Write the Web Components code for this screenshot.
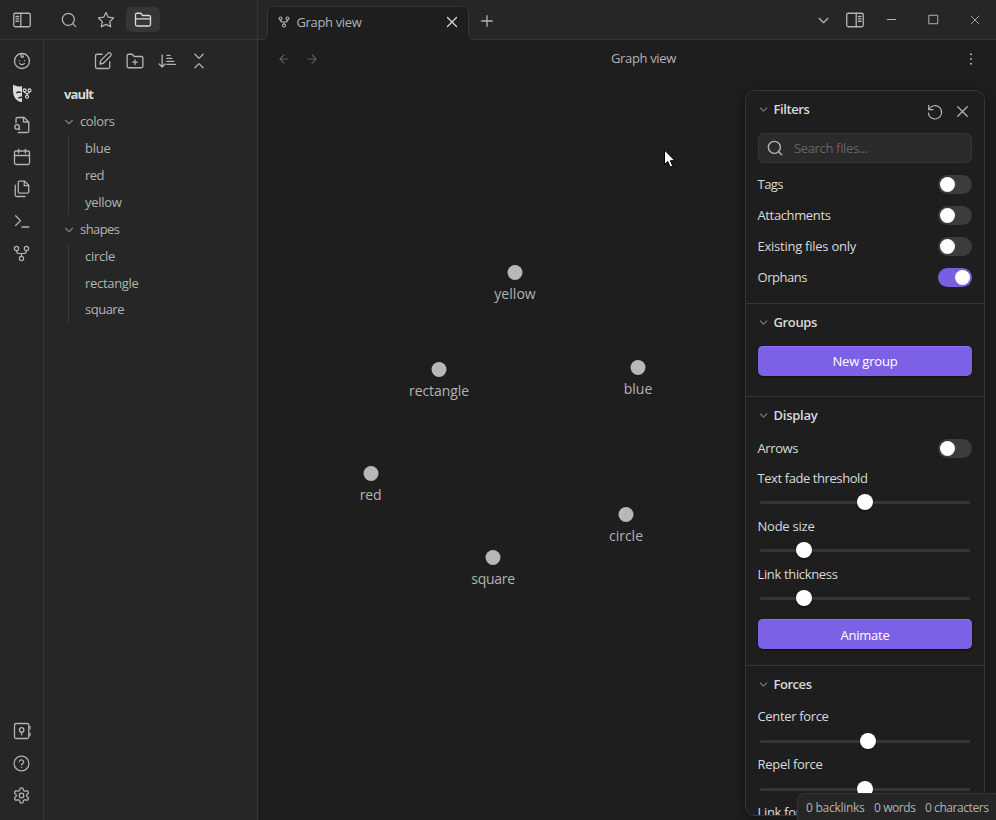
<!DOCTYPE html>
<html lang="en">
<head>
<meta charset="utf-8">
<title>Graph view</title>
<style>
html,body{margin:0;height:100%;background:#1e1e1e;overflow:hidden}
body{font:13px/18px "Open Sans","Noto Sans",sans-serif;color:#dadada}
</style>
</head>
<body>
<vault-app></vault-app>
<script>
const ICONS = {
  panelLeft:'<rect x="1" y="3" width="22" height="18" rx="2"/><path d="M10.4 3v18M4 7.3h3.4M4 10.5h3.4M4 13.7h3.4"/>',
  panelRight:'<rect x="1" y="3" width="22" height="18" rx="2"/><path d="M13.6 3v18M16.600 7.300h3.400M16.600 10.500h3.400M16.600 13.700h3.400"/>',
  search:'<circle cx="11" cy="11" r="9"/><path d="m22 22-4.5-4.500"/>',
  star:'<path d="M12 2l3.090 6.260L22 9.270l-5 4.870 1.180 6.880L12 17.770l-6.180 3.250L7 14.140 2 9.270l6.910-1.010z"/>',
  folder:'<path d="M22 10v8a2 2 0 0 1-2 2H4a2 2 0 0 1-2-2V5a2 2 0 0 1 2-2h5l2.500 3H20a2 2 0 0 1 2 2z"/><path d="M2 10.500h20"/>',
  baby:'<circle cx="12" cy="12" r="10"/><path d="M8.500 11.500h.01M15.500 11.500h.01M8.800 15.500c1.700 1.700 4.700 1.700 6.400 0M12.500 2.200c-2.300 1.300-2.500 4.300-.3 4.800 1.300.2 2-.9 1.500-1.800"/>',
  mask:'<path fill="currentColor" stroke="none" d="M0 0.500c4 2.500 8 3 12 2.500v21C4.500 23.500 0 17 0 9z"/><path stroke="#262626" stroke-width="2" stroke-linecap="butt" d="M4.500 12q3-2.500 6-.5M7 19q2-1.500 5.500-1.500"/><g stroke-width="1.500"><circle cx="15.500" cy="8.500" r="2"/><circle cx="22" cy="8.500" r="2"/><circle cx="18.700" cy="17" r="2"/><path d="M15.500 10.500c0 2 3.200 1.300 3.200 4 0-2.700 3.300-2 3.300-4"/></g>',
  fileSearch:'<path d="M4 9V4a2 2 0 0 1 2-2h9l6 6v12a2 2 0 0 1-2 2H7"/><path d="M14 2v6h6"/><circle cx="5.500" cy="14.500" r="3"/><path d="m9 18-1.500-1.500"/>',
  calendar:'<rect x="2" y="4" width="20" height="18" rx="2"/><path d="M16.500 1.500v5M7.500 1.500v5M2 10h20"/>',
  files:'<path d="M15.500 1.500H9a2 2 0 0 0-2 2v12a2 2 0 0 0 2 2h10a2 2 0 0 0 2-2V7z"/><path d="M15 2v5.500h5.500M3 7v13a2 2 0 0 0 2 2h11"/>',
  terminal:'<path d="m3.500 18 6.500-6.500L3.500 5M12 20h9"/>',
  fork:'<circle cx="5" cy="5" r="3"/><circle cx="19" cy="5" r="3"/><circle cx="12" cy="19" r="3"/><path d="M5 8c0 4 2 4 4 4h6c2 0 4 0 4-4M12 12v4"/>',
  vault:'<rect x="2" y="2" width="19" height="20" rx="2"/><circle cx="11.500" cy="10.500" r="3"/><path d="M11.500 13.500V17M22.700 6v3M22.700 15v3"/>',
  help:'<circle cx="12" cy="12" r="10.500"/><path d="M8.900 9a3.200 3.200 0 0 1 6.200 1c0 2-3.100 2.700-3.100 4M12 17.500h.01"/>',
  gear:'<path transform="matrix(1.080 0 0 1.080 -.96 -.96)" d="M12.220 2h-.44a2 2 0 0 0-2 2v.18a2 2 0 0 1-1 1.730l-.43.250a2 2 0 0 1-2 0l-.15-.08a2 2 0 0 0-2.730.730l-.22.380a2 2 0 0 0 .73 2.730l.15.100a2 2 0 0 1 1 1.720v.510a2 2 0 0 1-1 1.740l-.15.090a2 2 0 0 0-.73 2.730l.22.380a2 2 0 0 0 2.730.730l.15-.08a2 2 0 0 1 2 0l.43.250a2 2 0 0 1 1 1.730V20a2 2 0 0 0 2 2h.44a2 2 0 0 0 2-2v-.18a2 2 0 0 1 1-1.730l.43-.25a2 2 0 0 1 2 0l.15.080a2 2 0 0 0 2.730-.73l.22-.39a2 2 0 0 0-.73-2.730l-.15-.08a2 2 0 0 1-1-1.740v-.5a2 2 0 0 1 1-1.740l.15-.09a2 2 0 0 0 .73-2.730l-.22-.38a2 2 0 0 0-2.730-.73l-.15.080a2 2 0 0 1-2 0l-.43-.25a2 2 0 0 1-1-1.730V4a2 2 0 0 0-2-2z"/><circle cx="12" cy="12" r="3.200"/>',
  edit:'<path d="M11 3H4a2 2 0 0 0-2 2v15a2 2 0 0 0 2 2h15a2 2 0 0 0 2-2v-7"/><path d="M18.500 1.800a2.400 2.400 0 0 1 3.700 3.400L12.500 15l-4.500 1 1-4.500z"/>',
  folderPlus:'<path d="M22.500 19a2 2 0 0 1-2 2h-17a2 2 0 0 1-2-2V5a2 2 0 0 1 2-2h5l2.500 3h9.500a2 2 0 0 1 2 2zM12 10.500v6M9 13.500h6"/>',
  sort:'<path d="M5.500 4v16M1.500 16l4 4 4-4M12 4.500h4M12 8.500h6.500M12 12.500h9M12 16.500h11"/>',
  collapse:'<path d="m6.500 21 5.500-5.500 5.500 5.500M6.500 3l5.500 5.500L17.500 3"/>',
  x:'<path d="M18 6 6 18M6 6l12 12"/>',
  plus:'<path d="M4 12h16M12 4v16"/>',
  left:'<path d="M19 12H5M12 19l-7-7 7-7"/>',
  right:'<path d="M5 12h14M12 5l7 7-7 7"/>',
  down:'<path d="m5 8.500 7 7 7-7"/>',
  min:'<path d="M6 12h12"/>',
  max:'<rect x="6" y="6" width="12" height="12"/>',
  dots:'<path d="M12 5v.01M12 12v.01M12 19v.01"/>',
  reset:'<path d="M2.500 2v6.500H9"/><path d="M3 8a10 10 0 1 1-1 5.500"/>'
};

const define = (name, css, html, ready) => customElements.define(name, class extends HTMLElement {
  connectedCallback() {
    if (this.shadowRoot) return;
    const t = document.createElement('template');
    t.innerHTML = `<style>:host{box-sizing:border-box}*{box-sizing:border-box}${css}</style>` + (typeof html === 'function' ? html(this) : html);
    this.attachShadow({mode:'open'}).append(t.content.cloneNode(true));
    if (ready) ready(this);
  }
});

// <ui-icon name size stroke>
define('ui-icon', ':host{display:inline-flex;flex:none}svg{display:block;overflow:visible}', el => {
  const s = el.getAttribute('size') || 18;
  return `<svg width="${s}" height="${s}" viewBox="0 0 24 24" fill="none" stroke="currentColor" stroke-width="${el.getAttribute('stroke') || 1.75}" stroke-linecap="round" stroke-linejoin="round">${ICONS[el.getAttribute('name')]}</svg>`;
});

// <ui-text w text>: one line of text, tracked to the advance width w
define('ui-text', ':host{display:inline-block;white-space:pre;flex:none;padding-bottom:2px}span{display:inline-block}',
  el => `<span>${el.getAttribute('text')}</span>`,
  el => {
    const span = el.shadowRoot.querySelector('span'), w = +el.getAttribute('w');
    if (!w) return;
    span.style.letterSpacing = ((w - span.getBoundingClientRect().width) / span.textContent.length).toFixed(3) + 'px';
  });

define('side-ribbon', `:host{display:flex;flex-direction:column;align-items:center;width:44px;border-right:1px solid #363636;padding:5px 0 9px;color:#b3b3b3}
ui-icon{height:32px;align-items:center}.gap{flex:1}.bright{color:#dadada}`,
`<ui-icon name="baby" size="18"></ui-icon><ui-icon class="bright" name="mask"></ui-icon><ui-icon name="fileSearch"></ui-icon><ui-icon name="calendar"></ui-icon><ui-icon name="files"></ui-icon><ui-icon name="terminal"></ui-icon><ui-icon name="fork" size="17"></ui-icon><div class="gap"></div><ui-icon name="vault"></ui-icon><ui-icon name="help" size="17"></ui-icon><ui-icon name="gear" size="17"></ui-icon>`);

define('left-header', `:host{display:flex;align-items:center;height:40px;border-bottom:1px solid #363636;padding-left:5px;color:#b3b3b3}
span{display:flex;align-items:center;justify-content:center;width:34px;height:25px;border-radius:5px;margin-right:3px}
.first{margin-right:13px}.on{background:#363636;color:#dadada}`,
`<span class="first"><ui-icon name="panelLeft"></ui-icon></span><span><ui-icon name="search" size="16" stroke="1.900"></ui-icon></span><span><ui-icon name="star"></ui-icon></span><span class="on"><ui-icon name="folder"></ui-icon></span>`);

define('tree-folder', `:host{display:block}.head{display:flex;align-items:center;height:27px}.head ui-icon{color:#7a7a7a}
.kids{margin-left:4px;border-left:1px solid #3a3a3a;padding-left:16px;display:flex;flex-direction:column;margin-top:1px;height:79px}
::slotted(*){height:27px;line-height:24px}`,
el => `<div class="head"><ui-icon name="down" size="12" stroke="2.500" style="margin-left:-1px;margin-right:5px"></ui-icon><ui-text text="${el.getAttribute('name')}" w="${el.getAttribute('w')}"></ui-text></div><div class="kids"><slot></slot></div>`);

define('file-tree', `:host{display:block;width:213px;padding:5px 0 0;color:#b3b3b3}
.tools{display:flex;justify-content:center;gap:14px;height:32px;align-items:center;padding-left:1px}
.tree{padding:4px 0 0 20px}.root{display:flex;align-items:center;height:27px;font-weight:700;color:#dadada}
tree-folder{height:108px}`,
`<div class="tools"><ui-icon name="edit"></ui-icon><ui-icon name="folderPlus"></ui-icon><ui-icon name="sort"></ui-icon><ui-icon name="collapse"></ui-icon></div>
<div class="tree"><div class="root"><ui-text text="vault" w="29"></ui-text></div>
<tree-folder name="colors" w="34.500"><ui-text text="blue" w="25.500"></ui-text><ui-text text="red" w="19"></ui-text><ui-text text="yellow" w="36.500"></ui-text></tree-folder>
<tree-folder name="shapes" w="39.500"><ui-text text="circle" w="30"></ui-text><ui-text text="rectangle" w="53.500"></ui-text><ui-text text="square" w="39" style="line-height:22px"></ui-text></tree-folder></div>`);

define('tab-bar', `:host{display:flex;height:40px;background:#262626;border-bottom:1px solid #363636;color:#b3b3b3;align-items:center;padding-left:9px}
.tab{position:relative;width:202px;height:40px;margin-bottom:-1px;display:flex;align-items:center;padding:5px 8px 0 11px}
.shape{position:absolute;left:-9px;top:0}.tab ui-icon,.tab ui-text{position:relative}
.tab ui-text{margin-left:6.500px;flex:1}.tab .x{color:#dadada}
.plus{margin:2px 0 0 10px;color:#b3b3b3}.gap{flex:1}.win{display:flex;align-items:center}`,
`<div class="tab"><svg class="shape" width="220" height="40"><path d="M0 40V39.500H3.500Q9.500 39.500 9.500 32V13.500Q9.500 6.500 16.500 6.500H203.500Q210.500 6.500 210.500 13.500V32Q210.500 39.500 216.500 39.500H220V40Z" fill="#1e1e1e"/><path d="M0 39.500H3.500Q9.500 39.500 9.500 32V13.500Q9.500 6.500 16.500 6.500H203.500Q210.500 6.500 210.500 13.500V32Q210.500 39.500 216.500 39.500H220" fill="none" stroke="#363636"/></svg>
<ui-icon name="fork" size="12" stroke="2.200" style="margin-top:-1px"></ui-icon><ui-text text="Graph view" w="65"></ui-text><ui-icon class="x" name="x" size="18" stroke="1.700" style="margin-top:-1px"></ui-icon></div>
<ui-icon class="plus" name="plus" size="16" stroke="2"></ui-icon><div class="gap"></div>
<div class="win"><ui-icon name="down" size="15" stroke="2" style="margin:1px 15px 0 0"></ui-icon><ui-icon name="panelRight" style="margin-right:18.500px"></ui-icon><ui-icon name="min" size="17" stroke="1.400" style="margin-right:25px"></ui-icon><ui-icon name="max" size="17" stroke="1.400" style="margin-right:25.500px"></ui-icon><ui-icon name="x" size="16" stroke="1.300" style="margin-right:13px"></ui-icon></div>`);

define('view-header', `:host{display:flex;align-items:center;height:38px;padding:0 17px 0 19px;color:#b3b3b3}
.nav{display:flex;gap:14px;color:#5c5c5c;width:100px}.title{flex:1;display:flex;justify-content:center;padding-left:31px}.end{width:100px;display:flex;justify-content:flex-end}`,
`<div class="nav"><ui-icon name="left" size="14" stroke="2"></ui-icon><ui-icon name="right" size="14" stroke="2"></ui-icon></div><div class="title"><ui-text text="Graph view" w="65"></ui-text></div><div class="end"><ui-icon name="dots" size="16" stroke="3"></ui-icon></div>`);

define('graph-node', `:host{position:absolute;display:flex;flex-direction:column;align-items:center;width:100px;transform:translate(-50.500px,-8px);font-size:14px;color:#b3b3b3}
i{width:15px;height:15px;border-radius:50%;background:#b8b8b8;margin-bottom:4.500px}`,
el => `<i></i><ui-text text="${el.getAttribute('name')}" w="${el.getAttribute('w')}"></ui-text>`);

define('ui-toggle', `:host{display:block;width:34px;height:19px;border-radius:10px;background:#3c3c3c;padding:2px;flex:none}
i{display:block;width:15px;height:15px;border-radius:50%;background:#fff}:host([on]){background:#7a5ee0}:host([on]) i{margin-left:15px}`, '<i></i>');

define('toggle-row', ':host{display:flex;align-items:center;justify-content:space-between;height:31px}ui-text{margin-left:-.5px}ui-toggle{margin-top:var(--toggle-shift,0)}',
el => `<ui-text text="${el.getAttribute('name')}" w="${el.getAttribute('w')}"></ui-text><ui-toggle ${el.hasAttribute('on') ? 'on' : ''}></ui-toggle>`);

define('slider-row', `:host{display:block;height:48px}.label{height:28px;display:flex;align-items:center;padding-top:var(--label-shift,0)}.label ui-text{margin-left:-.5px}
.track{height:20px;padding:0 2px;display:flex;align-items:center}.bar{height:3px;border-radius:2px;background:#363636;flex:1;display:flex;align-items:center}
i{flex:none;width:16.500px;height:16.500px;border-radius:50%;background:#fff;box-shadow:0 1px 2px #0008}`,
el => `<div class="label"><ui-text text="${el.getAttribute('name')}" w="${el.getAttribute('w')}"></ui-text></div><div class="track"><div class="bar"><i style="margin-left:${el.getAttribute('at')}px"></i></div></div>`);

define('ui-button', `:host{display:flex;align-items:center;justify-content:center;height:30px;border-radius:5px;background:#7c61e6;color:#fff;padding-top:2px;box-shadow:inset 0 1px #8a72ea,0 1px 2px #0009}`,
el => `<ui-text text="${el.getAttribute('name')}" w="${el.getAttribute('w')}"></ui-text>`);

define('panel-section', `:host{display:block;padding:0 12px;border-bottom:1px solid #363636;flex:none}
.head{display:flex;align-items:center;height:37px}.head>ui-icon{color:#7a7a7a;margin-right:5px;margin-left:-.5px}ui-text{font-weight:600}.gap{flex:1}`,
el => `<div class="head"><ui-icon name="down" size="11" stroke="2.600"></ui-icon><ui-text text="${el.getAttribute('name')}" w="${el.getAttribute('w')}"></ui-text><div class="gap"></div><slot name="actions"></slot></div><slot></slot>`);

define('search-field', `:host{display:flex;align-items:center;height:30px;margin:5px 0 6px;border:1px solid #363636;border-radius:5px;background:#2a2a2a;padding-left:8px;color:#b3b3b3}
ui-text{color:#666;margin-left:11px;margin-top:1px}`,
`<ui-icon name="search" size="16" stroke="2.100"></ui-icon><ui-text text="Search files..." w="74"></ui-text>`);

define('graph-controls', `:host{position:absolute;left:487px;top:50px;width:240px;height:726px;border:1px solid #363636;border-radius:10px;background:#1e1e1e;overflow:hidden;display:flex;flex-direction:column;box-shadow:0 2px 12px #0006}
.act{display:flex;gap:10.500px;align-items:center;color:#b3b3b3;padding-top:4px}`,
`<panel-section name="Filters" w="36" style="height:213px"><span slot="actions" class="act"><ui-icon name="reset" size="16" stroke="1.700"></ui-icon><ui-icon name="x" size="19" stroke="1.600"></ui-icon></span>
<search-field></search-field><toggle-row name="Tags" w="25.500"></toggle-row><toggle-row name="Attachments" w="73"></toggle-row><toggle-row name="Existing files only" w="98.500"></toggle-row><toggle-row name="Orphans" w="49.500" on></toggle-row></panel-section>
<panel-section name="Groups" w="43.500" style="height:93px"><ui-button name="New group" w="65" style="margin-top:5px"></ui-button></panel-section>
<panel-section name="Display" w="44" style="height:269px;--label-shift:1.500px;--toggle-shift:-1px"><toggle-row name="Arrows" w="40.500" style="height:30px"></toggle-row><slider-row name="Text fade threshold" w="110" at="96.500"></slider-row><slider-row name="Node size" w="57" at="35.500"></slider-row><slider-row name="Link thickness" w="80" at="35.500"></slider-row><ui-button name="Animate" w="49" style="margin-top:11px;padding-top:3.500px"></ui-button></panel-section>
<panel-section name="Forces" w="38" style="height:190px"><slider-row name="Center force" w="71" at="99.500"></slider-row><slider-row name="Repel force" w="65" at="96.500"></slider-row><slider-row name="Link force" w="56" at="96.500"></slider-row></panel-section>`);

define('status-bar', `:host{position:absolute;right:0;bottom:0;width:199px;height:27px;background:#262626;border:1px solid #363636;border-width:1px 0 0 1px;border-top-left-radius:8px;display:flex;align-items:center;gap:9.500px;padding:4px 0 0 8px;color:#b3b3b3;font-size:12px;white-space:nowrap}`,
`<ui-text text="0 backlinks" w="58.500"></ui-text><ui-text text="0 words" w="41.500"></ui-text><ui-text text="0 characters" w="63.500"></ui-text>`);

define('graph-canvas', ':host{display:block;position:absolute;inset:0}.cursor{position:absolute;left:406px;top:110px}',
`<graph-node name="yellow" w="41.500" style="left:257.500px;top:233px"></graph-node><graph-node name="rectangle" w="60" style="left:181.500px;top:330px"></graph-node><graph-node name="blue" w="28.500" style="left:380.500px;top:328px"></graph-node><graph-node name="red" w="21.500" style="left:113px;top:434px"></graph-node><graph-node name="circle" w="34" style="left:368.500px;top:475px"></graph-node><graph-node name="square" w="43.500" style="left:235.500px;top:518px"></graph-node>
<svg class="cursor" width="14" height="20"><path d="M0.500 0V14.500L3.800 11.500 6.100 17 8.700 15.900 6.400 10.700H11Z" fill="#fff" stroke="#000" stroke-width="1"/></svg>`);

define('vault-app', `:host{display:flex;width:996px;height:820px;overflow:hidden}
.left{width:258px;background:#262626;border-right:1px solid #363636;display:flex;flex-direction:column;flex:none}.cols{display:flex;flex:1}
.main{flex:1;display:flex;flex-direction:column;min-width:0}.view{flex:1;position:relative}`,
`<div class="left"><left-header></left-header><div class="cols"><side-ribbon></side-ribbon><file-tree></file-tree></div></div>
<div class="main"><tab-bar></tab-bar><div class="view"><graph-canvas></graph-canvas><view-header></view-header><graph-controls></graph-controls><status-bar></status-bar></div></div>`);
</script>
</body>
</html>
